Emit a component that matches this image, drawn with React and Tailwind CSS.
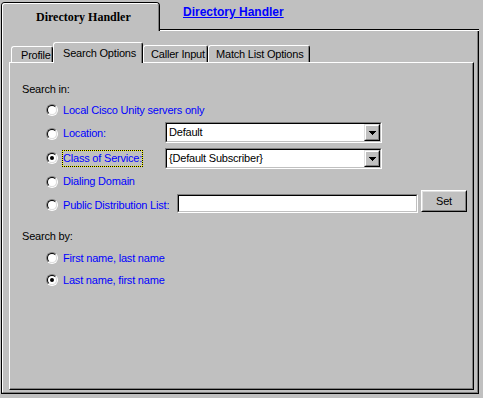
import React from 'react';

function Radio({ checked }) {
  return (
    <div className="w-[12px] h-[12px] shrink-0 rounded-full border border-t-[#808080] border-l-[#808080] border-r-white border-b-white">
      <div className="w-full h-full rounded-full border border-t-black border-l-black border-r-[#dfdfdf] border-b-[#dfdfdf] bg-white flex items-center justify-center">
        {checked && <div className="w-[4px] h-[4px] rounded-full bg-black" />}
      </div>
    </div>
  );
}

function Sunken({ className, children }) {
  return (
    <div className={`border border-t-[#808080] border-l-[#808080] border-r-white border-b-white ${className}`}>
      <div className="h-full border border-t-black border-l-black border-r-[#c0c0c0] border-b-[#c0c0c0] bg-white flex items-center">
        {children}
      </div>
    </div>
  );
}

function Select({ value, className }) {
  return (
    <Sunken className={`w-[217px] h-[21px] ${className}`}>
      <span className="flex-1 pl-[2px] text-black leading-[13px]">{value}</span>
      <div className="w-[16px] h-full border border-t-[#dfdfdf] border-l-[#dfdfdf] border-r-black border-b-black">
        <div className="h-full border border-t-white border-l-white border-r-[#808080] border-b-[#808080] bg-[#c0c0c0] flex items-center justify-center">
          <svg width="7" height="4" viewBox="0 0 7 4" shapeRendering="crispEdges">
            <path d="M0 0h7v1h-1v1h-1v1h-1v1h-1v-1h-1v-1h-1v-1h-1z" fill="#000" />
          </svg>
        </div>
      </div>
    </Sunken>
  );
}

export default function App() {
  return (
    <div className="w-[483px] h-[398px] bg-[#c0c0c0] pl-[1px] pt-[2px] overflow-hidden font-['Liberation_Sans',Arial,sans-serif] text-[11px] tracking-[-0.2px]">
      {/* outer tab row */}
      <div className="flex h-[29px]">
        <div className="w-[159px] h-full border-l border-t border-r border-black rounded-t-[4px]">
          <div className="h-full border-l border-t border-r border-l-white border-t-white border-r-[#808080] rounded-t-[3px] pl-[33px] pt-[5px]">
            <span className="font-['Liberation_Serif',serif] font-bold text-[12px] leading-[14px] tracking-normal text-black">
              Directory Handler
            </span>
          </div>
        </div>
        <div className="w-[319px] flex flex-col">
          <div className="flex-1 pl-[23px] pt-[2px]">
            <span className="text-[12px] leading-[14px] font-bold tracking-normal text-[#0000ff] underline">
              Directory Handler
            </span>
          </div>
          <div className="h-px bg-black" />
          <div className="h-px bg-white" />
        </div>
      </div>

      {/* outer panel */}
      <div className="w-[478px] h-[363px] border-l border-r border-b border-black">
        <div className="h-full border-l border-r border-b border-l-white border-r-[#808080] border-b-[#808080] flex flex-col pl-[6px] pr-[3px] pt-[11px] pb-[2px]">
          {/* inner tabs */}
          <div className="flex items-end pl-[2px] text-black">
            <div className="w-[42px] h-[16px] border-l border-t border-r border-l-white border-t-white border-r-black rounded-t-[3px]">
              <div className="h-full border-r border-r-[#808080] flex items-center pl-[9px] pt-[1px] leading-[13px]">Profile</div>
            </div>
            <div className="relative z-10 -mb-px w-[90px] h-[21px] bg-[#c0c0c0] border-l border-t border-r border-l-white border-t-white border-r-black rounded-t-[3px]">
              <div className="h-full border-r border-r-[#808080] flex items-center pl-[9px] pt-[1px] leading-[13px]">Search Options</div>
            </div>
            <div className="w-[65px] h-[17px] border-l border-t border-r border-l-white border-t-white border-r-black rounded-t-[3px]">
              <div className="h-full border-r border-r-[#808080] flex items-center pl-[7px] pt-[1px] leading-[13px]">Caller Input</div>
            </div>
            <div className="w-[102px] h-[17px] border-l border-t border-r border-l-white border-t-white border-r-black rounded-t-[3px]">
              <div className="h-full border-r border-r-[#808080] flex items-center pl-[7px] pt-[1px] leading-[13px]">Match List Options</div>
            </div>
          </div>

          {/* inner panel */}
          <div className="flex-1 border border-t-white border-l-white border-r-black border-b-black">
            <div className="h-full border-r border-b border-r-[#808080] border-b-[#808080] flex flex-col pl-[12px] pt-[20px] leading-[13px]">
              <div className="text-black">Search in:</div>

              <div className="ml-[24px] mt-[2px] flex flex-col text-[#0000ff]">
                <div className="h-[24px] flex items-center gap-[5px]">
                  <Radio />
                  <span>Local Cisco Unity servers only</span>
                </div>
                <div className="h-[23px] flex items-center gap-[5px]">
                  <Radio />
                  <span className="w-[97px]">Location:</span>
                  <Select value="Default" className="self-start" />
                </div>
                <div className="h-[26px] flex items-center gap-[5px]">
                  <Radio checked />
                  <div className="w-[97px]">
                    <span className="inline-block leading-[15px] outline outline-1 outline-dotted outline-black shadow-[0_0_0_1px_#ffff00]">
                      Class of Service:
                    </span>
                  </div>
                  <Select value="{Default Subscriber}" className="self-start mt-[3px]" />
                </div>
                <div className="h-[21px] flex items-center gap-[5px]">
                  <Radio />
                  <span>Dialing Domain</span>
                </div>
                <div className="h-[26px] flex items-center gap-[5px]">
                  <Radio />
                  <span className="w-[109px]">Public Distribution List:</span>
                  <Sunken className="w-[241px] h-[19px] self-start mt-[2px]" />
                  <div className="ml-[-2px] self-start mt-[-2px] w-[46px] h-[22px] border border-t-white border-l-white border-r-black border-b-black">
                    <div className="h-full border border-t-[#dfdfdf] border-l-[#dfdfdf] border-r-[#808080] border-b-[#808080] flex items-center justify-center text-black">
                      Set
                    </div>
                  </div>
                </div>
              </div>

              <div className="mt-[12px] text-black">Search by:</div>

              <div className="ml-[24px] mt-[4px] flex flex-col text-[#0000ff]">
                <div className="h-[22px] flex items-center gap-[5px]">
                  <Radio />
                  <span>First name, last name</span>
                </div>
                <div className="h-[22px] flex items-center gap-[5px]">
                  <Radio checked />
                  <span>Last name, first name</span>
                </div>
              </div>
            </div>
          </div>
        </div>
      </div>
    </div>
  );
}
